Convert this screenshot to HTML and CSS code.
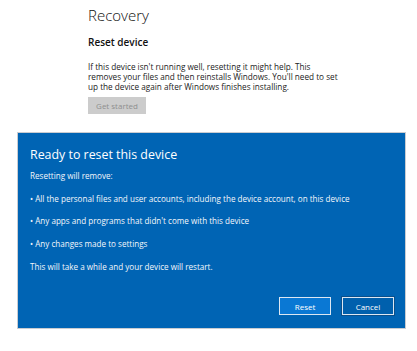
FILE: index.html
```html
<!DOCTYPE html>
<html lang="en">
<head>
    <meta charset="UTF-8">
    <meta name="viewport" content="width=device-width, initial-scale=1.0">
    <title>Recovery</title>
    <link rel="stylesheet" href="styles.css">
</head>
<body>
    <div class="settings">
        <h1>Recovery</h1>
        <h2>Reset device</h2>
        <p>If this device isn't running well, resetting it might help. This<br>removes your files and then reinstalls Windows. You'll need to set up the device again after Windows finishes installing.</p>
        <button class="btn-disabled" disabled>Get started</button>
    </div>

    <div class="dialog">
        <h3>Ready to reset this device</h3>
        <p class="intro">Resetting will remove:</p>
        <ul class="remove-list">
            <li>All the personal files and user accounts, including the device account, on this device</li>
            <li>Any apps and programs that didn't come with this device</li>
            <li>Any changes made to settings</li>
        </ul>
        <p class="note">This will take a while and your device will restart.</p>
        <div class="actions">
            <button class="btn btn-primary">Reset</button>
            <button class="btn btn-secondary">Cancel</button>
        </div>
    </div>
</body>
</html>
```

FILE: styles.css
```css
body {
    font-family: 'Open Sans', 'Noto Sans', sans-serif;
    margin: 0;
    padding: 0;
    background-color: #fff;
    color: #222;
}

.settings {
    padding: 5px 0 0 88px;
    height: 127px;
}

h1 {
    margin: 0;
    font-size: 15px;
    font-weight: 300;
    line-height: 20px;
    color: #111;
}

h2 {
    margin: 10px 0 0;
    font-size: 10px;
    font-weight: 600;
    line-height: 14px;
    color: #111;
}

.settings p {
    margin: 13px 0 0;
    width: 252px;
    font-size: 8.2px;
    line-height: 10px;
    color: #222;
}

.btn-disabled {
    display: block;
    margin-top: 5px;
    width: 58px;
    height: 17px;
    padding: 0;
    border: none;
    background-color: #cccccc;
    color: #8f8f8f;
    font-family: inherit;
    font-size: 8px;
}

.dialog {
    margin-left: 17px;
    width: 389px;
    height: 197px;
    padding: 0 0 0 12px;
    box-sizing: border-box;
    background-color: #0064b4;
    border: 1px solid #c9ccd1;
    color: #f4f7fb;
    display: flex;
    flex-direction: column;
}

.dialog h3 {
    margin: 13px 0 0;
    font-size: 12.4px;
    font-weight: 400;
    line-height: 18px;
    color: #fff;
}

.dialog p,
.remove-list li {
    font-size: 8.1px;
    line-height: 10px;
}

.intro {
    margin: 7px 0 0;
}

.remove-list {
    list-style: none;
    margin: 12.5px 0 0;
    padding: 0;
    display: flex;
    flex-direction: column;
    gap: 12.5px;
}

.remove-list li::before {
    content: "\2022  ";
    white-space: pre;
}

.note {
    margin: 13px 0 0;
}

.actions {
    margin-top: auto;
    margin-bottom: 13px;
    padding-right: 11px;
    display: flex;
    justify-content: flex-end;
    gap: 11px;
}

.btn {
    width: 52px;
    height: 18px;
    padding: 0;
    font-family: inherit;
    font-size: 8px;
    color: #fff;
    border: 1.5px solid #dde7f2;
}

.btn-primary {
    background-color: #0a78d4;
}

.btn-secondary {
    background-color: #0060ad;
    outline: 1px solid #0a4f8a;
}
```
